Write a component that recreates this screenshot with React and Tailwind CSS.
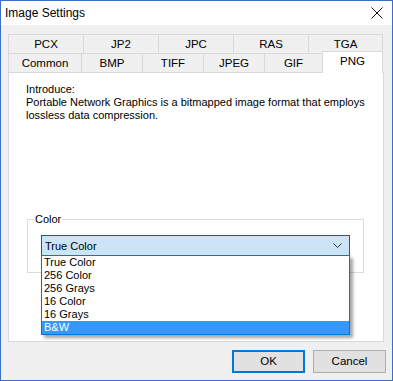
import React from 'react'

const row1 = [
  { label: 'PCX', w: 'w-[75px]' },
  { label: 'JP2', w: 'w-[75px]' },
  { label: 'JPC', w: 'w-[75px]' },
  { label: 'RAS', w: 'w-[75px]' },
  { label: 'TGA', w: 'w-[75px]' },
]

const row2 = [
  { label: 'Common', w: 'w-[73px]' },
  { label: 'BMP', w: 'w-[61px]' },
  { label: 'TIFF', w: 'w-[61px]' },
  { label: 'JPEG', w: 'w-[61px]' },
  { label: 'GIF', w: 'w-[58px]' },
]

const colorModes = ['True Color', '256 Color', '256 Grays', '16 Color', '16 Grays', 'B&W']

const App = () => {
  return (
    <div className="w-[393px] h-[381px] border border-[#3b6fc2] bg-[#f0f0f0] flex flex-col font-['Liberation_Sans',Arial,sans-serif] text-[11.5px] leading-[13px] text-black">
      {/* title bar */}
      <div className="h-[24px] bg-white flex items-center justify-between pl-[4px] pr-[9px] shrink-0">
        <span className="text-[12px] pt-[1px]">Image Settings</span>
        <svg width="12" height="12" viewBox="0 0 12 12">
          <path d="M0.5 0.5 L11.5 11.5 M11.5 0.5 L0.5 11.5" stroke="#111" strokeWidth="1" />
        </svg>
      </div>

      <div className="flex flex-col pl-[7px] pr-[8px] pt-[9px]">
        {/* back row of tabs */}
        <div className="flex h-[19px]">
          {row1.map((t, i) => (
            <div
              key={t.label}
              className={`${t.w} border-t border-l border-[#d9d9d9] flex items-center justify-center pt-[1px] ${i === row1.length - 1 ? 'border-r' : ''}`}
            >
              {t.label}
            </div>
          ))}
        </div>

        {/* front row of tabs */}
        <div className="flex h-[19px] relative z-10">
          {row2.map((t) => (
            <div
              key={t.label}
              className={`${t.w} border-t border-l border-[#d9d9d9] flex items-center justify-center pt-[1px]`}
            >
              {t.label}
            </div>
          ))}
          <div className="w-[61px] h-[22px] -mt-[2px] bg-white border-t border-l border-r border-[#d9d9d9] flex justify-center pt-[3px]">
            PNG
          </div>
        </div>

        {/* tab page */}
        <div className="h-[270px] bg-white border border-[#d9d9d9] flex flex-col pt-[10px] text-[11px]">
          <div className="pl-[17px] whitespace-nowrap">
            <div>Introduce:</div>
            <div>Portable Network Graphics is a bitmapped image format that employs</div>
            <div>lossless data compression.</div>
          </div>

          <div className="relative ml-[18px] mr-[19px] mt-[97px] border border-[#dcdcdc] pt-[15px] pb-[16px] pl-[13px] pr-[13px]">
            <span className="absolute -top-[7px] left-[6px] bg-white px-[1px]">Color</span>

            <div className="relative">
              <div className="h-[21px] border border-[#0a5cad] bg-[#cce4f7] flex items-center justify-between pl-[3px] pr-[7px]">
                <span className="pt-[1px]">True Color</span>
                <svg width="9" height="5" viewBox="0 0 9 5">
                  <path d="M0.5 0.5 L4.5 4.5 L8.5 0.5" stroke="#333" strokeWidth="1" fill="none" />
                </svg>
              </div>

              <div className="absolute left-0 top-[20px] w-full border border-[#0078d7] bg-white flex flex-col shadow-[3px_3px_3px_rgba(0,0,0,0.35)] z-20">
                {colorModes.map((c, i) => (
                  <div
                    key={c}
                    className={`h-[13px] pl-[2px] ${i === colorModes.length - 1 ? 'bg-[#3399ff] text-white' : ''}`}
                  >
                    {c}
                  </div>
                ))}
              </div>
            </div>
          </div>
        </div>

        {/* dialog buttons */}
        <div className="flex justify-end gap-[8px] mt-[8px] -mr-[2px]">
          <button className="w-[73px] h-[23px] border-2 border-[#0078d7] bg-[#e1e1e1] text-[11.5px]">OK</button>
          <button className="w-[73px] h-[23px] border border-[#adadad] bg-[#e1e1e1] text-[11.5px]">Cancel</button>
        </div>
      </div>
    </div>
  )
}

export default App
